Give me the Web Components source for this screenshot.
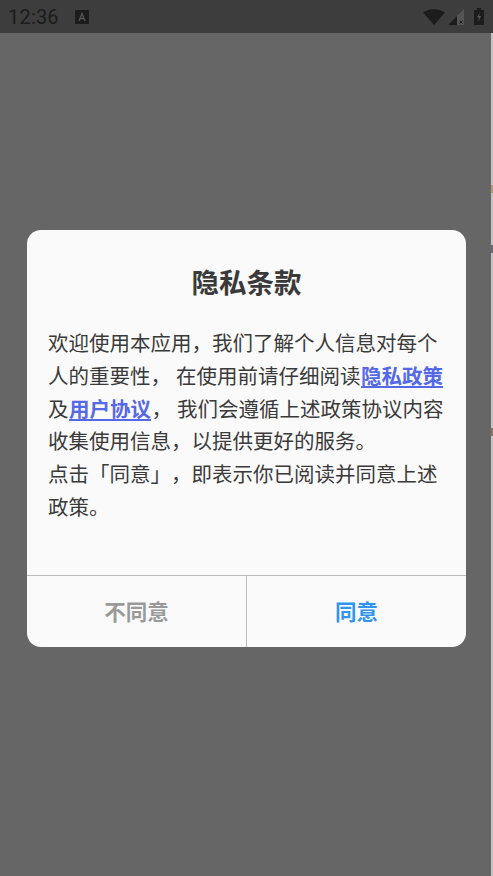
<!DOCTYPE html>
<html lang="zh">
<head>
<meta charset="utf-8">
<title>隐私条款</title>
<style>
  html, body { margin: 0; height: 100%; }
  body { font-family: "Roboto", "Noto Sans CJK SC", sans-serif; background: #666; }
</style>
</head>
<body>
<app-screen>
  <status-bar slot="status" time="12:36"></status-bar>
  <privacy-dialog heading="隐私条款">
    欢迎使用本应用，我们了解个人信息对每个人的重要性， 在使用前请仔细阅读<a href="#">隐私政策</a>及<a href="#">用户协议</a>， 我们会遵循上述政策协议内容收集使用信息，以提供更好的服务。<br>点击「同意」，即表示你已阅读并同意上述政策。
  </privacy-dialog>
</app-screen>

<script>
class AppScreen extends HTMLElement {
  constructor() {
    super();
    this.attachShadow({ mode: "open" });
  }

  connectedCallback() {
    this.shadowRoot.innerHTML = `
      <style>
        :host {
          display: flex;
          flex-direction: column;
          height: 876px;
          overflow: hidden;
          background: #666;
        }
        .content {
          flex: 1;
          display: flex;
        }
        main {
          flex: 1;
          padding: 197px 25px 0 27px;
        }
        /* the page under the scrim shows along the right edge */
        .edge {
          width: 2px;
          background: linear-gradient(#c4c4c4 0 152px, #b39a78 152px 160px, #c4c4c4 160px 212px,
            #6a6a78 212px 220px, #c4c4c4 220px 395px, #8a7a66 395px 403px, #c4c4c4 403px);
        }
      </style>
      <slot name="status"></slot>
      <div class="content">
        <main><slot></slot></main>
        <div class="edge"></div>
      </div>
    `;
  }
}

class StatusBar extends HTMLElement {
  constructor() {
    super();
    this.attachShadow({ mode: "open" });
  }

  connectedCallback() {
    const time = this.getAttribute("time") || "";
    this.shadowRoot.innerHTML = `
      <style>
        :host {
          display: flex;
          align-items: center;
          height: 33px;
          padding: 0 9px 0 8px;
          background: #3d3d3d;
          color: #1c1c1c;
          font-size: 20px;
        }
        .time { width: 67px; letter-spacing: 0.2px; }
        .right { margin-left: auto; display: flex; align-items: center; gap: 3px; }
        svg { display: block; }
      </style>
      <span class="time">${time}</span>
      <svg width="14" height="14" viewBox="0 0 14 14">
        <rect width="14" height="14" rx="1" fill="#1c1c1c"/>
        <path d="M4 11 7 3.500 10 11M5.200 8.500h3.600" fill="none" stroke="#555" stroke-width="1.3"/>
      </svg>
      <div class="right">
        <svg width="22" height="16" viewBox="0 0 22 16">
          <path d="M0 3.500C6 -1 16 -1 22 3.500L11 16Z" fill="#1c1c1c"/>
        </svg>
        <svg width="16" height="16" viewBox="0 0 16 16">
          <path d="M16 0V16H0Z" fill="#555"/>
          <path d="M9 7V16H0Z" fill="#1c1c1c"/>
          <path d="M11.500 11.500l3 3M14.500 11.500l-3 3" stroke="#1c1c1c" stroke-width="1"/>
        </svg>
        <svg width="10" height="17" viewBox="0 0 10 17" style="margin-left:7px">
          <path d="M3 0h4v2h3v15H0V2h3Z" fill="#1c1c1c"/>
          <path d="M6 4 3 9.500h2L4 14l3.200-6H5Z" fill="#555"/>
        </svg>
      </div>
    `;
  }
}

class PrivacyDialog extends HTMLElement {
  constructor() {
    super();
    this.attachShadow({ mode: "open" });
  }

  connectedCallback() {
    const heading = this.getAttribute("heading") || "";
    this.shadowRoot.innerHTML = `
      <style>
        :host {
          display: flex;
          flex-direction: column;
          height: 417px;
          border-radius: 14px;
          overflow: hidden;
          background: #fafafa;
          color: #3a3a3a;
        }
        h2 {
          margin: 0;
          padding-top: 35px;
          height: 58px;
          line-height: 38px;
          text-align: center;
          font-size: 27.5px;
          font-weight: 700;
        }
        .body {
          flex: 1;
          padding: 5px 21px 0;
          font-size: 20.5px;
          line-height: 32.8px;
          text-spacing-trim: space-all;
        }
        ::slotted(a) {
          margin: 0 0.5px;
          color: #5468e8;
          font-weight: 700;
        }
        footer {
          display: flex;
          height: 71px;
          border-top: 1px solid #bbb;
        }
        dialog-button { flex: 1; }
        dialog-button + dialog-button { border-left: 1px solid #bbb; }
      </style>
      <h2>${heading}</h2>
      <div class="body"><slot></slot></div>
      <footer>
        <dialog-button color="#999">不同意</dialog-button>
        <dialog-button color="#2f95ee">同意</dialog-button>
      </footer>
    `;
  }
}

class DialogButton extends HTMLElement {
  constructor() {
    super();
    this.attachShadow({ mode: "open" });
  }

  connectedCallback() {
    this.shadowRoot.innerHTML = `
      <style>
        :host {
          display: flex;
          align-items: center;
          justify-content: center;
          padding-bottom: 2px;
          font-size: 21.5px;
          font-weight: 700;
          color: ${this.getAttribute("color")};
          cursor: pointer;
        }
      </style>
      <slot></slot>
    `;
  }
}

customElements.define("app-screen", AppScreen);
customElements.define("status-bar", StatusBar);
customElements.define("privacy-dialog", PrivacyDialog);
customElements.define("dialog-button", DialogButton);
</script>
</body>
</html>
